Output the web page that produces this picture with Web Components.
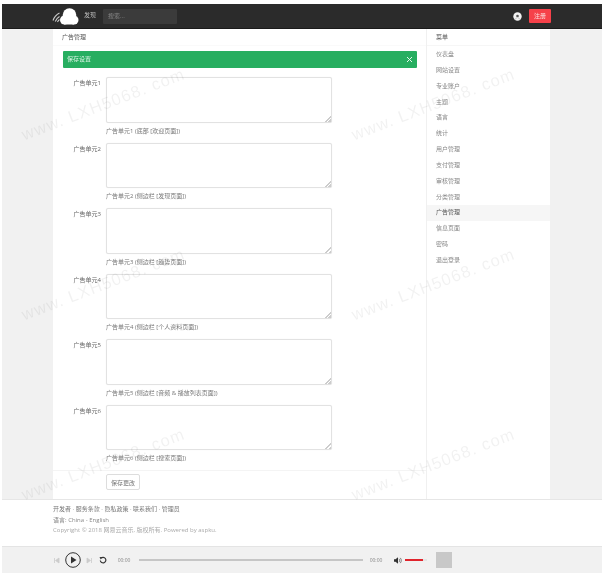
<!DOCTYPE html>
<html lang="zh"><head><meta charset="utf-8"><title>广告管理</title>
<style>
html,body{margin:0;padding:0;height:573px;overflow:hidden;background:#fff}
body{font:6px/1.3 "Open Sans","Noto Sans CJK SC",sans-serif;color:#666}
</style></head><body>
<app-shell>
  <app-header></app-header>
  <main-area></main-area>
  <site-footer></site-footer>
  <audio-player></audio-player>
  <water-marks></water-marks>
</app-shell>
<script>
function def(name,html){
  customElements.define(name,class extends HTMLElement{
    constructor(){super();this.attachShadow({mode:'open'}).innerHTML=typeof html==='function'?html(this):html;}
  });
}
def('app-shell',`<style>:host{display:flex;flex-direction:column;position:relative;box-sizing:border-box;width:600px;height:569px;margin:4px 0 0 2px;filter:blur(.35px)}</style><slot></slot>`);
def('app-header',`<style>
:host{display:flex;align-items:center;height:24px;flex:none;background:#2b2b2b;border-bottom:1px solid #1a1a1a;padding:0 51px 0 50px;color:#ccc}
svg{display:block}
.d{margin-left:5px;width:19px;font-size:6px;color:#bbb}
.s{width:74px;height:15px;box-sizing:border-box;background:#3b3b3b;padding:0 5px;line-height:15px;color:#888;border-radius:1px}
.g{flex:1}
.b{width:22px;height:14px;background:#f6414a;color:#fbdcdc;text-align:center;line-height:14px;border-radius:1px;margin-left:7px}
</style>
<svg width="27" height="18" viewBox="0 0 27 18" style="margin-top:1px"><g fill="#fff"><circle cx="17.500" cy="7" r="6.800"/><circle cx="12.500" cy="12" r="4.500"/><circle cx="22" cy="12" r="4.500"/><rect x="12" y="10" width="10" height="6.500"/></g><path d="M1 12.500C2 9.500 4.500 6.500 7.500 5M3.300 13.500C4 11.500 5.300 9.800 7.500 8.500M5.500 14C6 13 6.500 12.300 7.500 11.500" stroke="#ccc" stroke-width="1.100" fill="none"/></svg>
<span class="d">发现</span><span class="s">搜索...</span><span class="g"></span>
<svg width="9" height="9" viewBox="0 0 9 9"><circle cx="4.500" cy="4.500" r="4.200" fill="#f2f2f2"/><circle cx="4.500" cy="4" r="1.300" fill="#555"/><path d="M2.200 7.500l1.500-2M6.800 7.500l-1.500-2" stroke="#999" stroke-width=".6"/></svg>
<span class="b">注册</span>`);
def('main-area',`<style>
:host{display:flex;flex:1;min-height:0;background:#f1f1f1;padding:0 52px 0 51px;border-bottom:1px solid #e6e6e6}
.wrap{flex:1;display:flex;background:#fff}
.c{flex:none;width:373px;border-right:1px solid #f0f0f0;display:flex;flex-direction:column}
.t{height:17px;padding:3px 0 0 9px;box-sizing:border-box;line-height:11px;color:#555;border-bottom:1px solid #fafafa}
</style><div class="wrap"><div class="c"><div class="t">广告管理</div><ad-form></ad-form></div><side-menu></side-menu></div>`);
def('alert-bar',`<style>
:host{display:flex;align-items:center;justify-content:space-between;height:17px;margin:5px 9px 0 10px;background:#27ae60;color:#d9f3e3;padding:0 4px;border-radius:1px}
svg{display:block}
</style><slot></slot><svg width="7" height="7" viewBox="0 0 7 7"><path d="M1 1l5 5M6 1L1 6" stroke="#e8f7ee" stroke-width="1"/></svg>`);
def('ad-row',h=>`<style>
:host{display:grid;grid-template-columns:48px 226px;grid-template-rows:auto 1fr;column-gap:5px;height:65.600px;color:#666}
label{text-align:right;padding-top:2px;line-height:8px}
textarea{display:block;box-sizing:border-box;width:226px;height:45.500px;margin:0;border:1px solid #e2e2e2;box-shadow:0 0 1px #e8e8e8;border-radius:2px;background:#fff;outline:0}
textarea::-webkit-resizer{background:linear-gradient(135deg,transparent 78%,#ccc 78%,#ccc 84%,transparent 84%,transparent 90%,#ccc 90%)}
.h{grid-column:2;margin-top:4px;line-height:8px;color:#777}
</style><label>${h.getAttribute('label')}</label><textarea aria-label="${h.getAttribute('label')}"></textarea><div class="h">${h.getAttribute('help')}</div>`);
def('ad-form',`<style>
:host{display:flex;flex-direction:column;flex:1}
.f{padding:9px 0 0 0;display:flex;flex-direction:column}
.a{border-top:1px solid #f4f4f4;margin-top:-.5px;padding:3px 0 0 53px}
.a button{display:block;width:34px;height:16px;box-sizing:border-box;border:1px solid #ddd;border-radius:2px;background:#fff;font:6px "Open Sans","Noto Sans CJK SC",sans-serif;color:#777;padding:0}
</style><alert-bar>保存设置</alert-bar><div class="f">
<ad-row label="广告单元1" help="广告单元1 (底部 [欢迎页面])"></ad-row>
<ad-row label="广告单元2" help="广告单元2 (侧边栏 [发现页面])"></ad-row>
<ad-row label="广告单元3" help="广告单元3 (侧边栏 [趋势页面])"></ad-row>
<ad-row label="广告单元4" help="广告单元4 (侧边栏 [个人资料页面])"></ad-row>
<ad-row label="广告单元5" help="广告单元5 (侧边栏 [音频 &amp; 播放列表页面])"></ad-row>
<ad-row label="广告单元6" help="广告单元6 (侧边栏 [搜索页面])"></ad-row>
</div><div class="a"><button>保存更改</button></div>`);
def('side-menu',`<style>
:host{display:block;flex:1;color:#888}
.h{height:17px;box-sizing:border-box;padding:3px 0 0 9px;line-height:11px;color:#555;border-bottom:1px solid #f6f6f6}
ul{list-style:none;margin:0;padding:1px 0 0}
li{height:15.850px;line-height:15.850px;padding-left:9px}
li.on{background:#f6f6f6;color:#555}
</style><div class="h">菜单</div><ul>
<li>仪表盘</li><li>网站设置</li><li>专业账户</li><li>主题</li><li>语言</li><li>统计</li><li>用户管理</li><li>支付管理</li><li>审核管理</li><li>分类管理</li><li class="on">广告管理</li><li>信息页面</li><li>密码</li><li>退出登录</li></ul>`);
def('site-footer',`<style>
:host{display:block;flex:none;height:47px;box-sizing:border-box;padding:4px 0 0 51px;background:#fff;color:#888;line-height:10.500px;border-bottom:1px solid #e4e4e4}
div{white-space:pre}
.m{color:#777}
</style><div class="m">开发者 · 服务条款 · 隐私政策 · 联系我们 · 管理员</div><div>语言: China - English</div><div style="color:#aaa">Copyright © 2018 网易云音乐, 版权所有. Powered by aspku.</div>`);
def('audio-player',`<style>
:host{display:flex;align-items:center;flex:none;height:26px;background:#f1f1f1;padding:0 0 0 51px;color:#888}
svg{display:block;flex:none}
.t{width:15px;text-align:center;font-size:5px}
.bar{width:224px;height:1.500px;background:#c6c6c6;margin:0 6px 0 7px}
.v{width:22px;height:1.500px;background:#e4e4e4;margin-left:3px}
.v i{display:block;width:18px;height:100%;background:#e0242c}
.art{width:16px;height:16px;background:#c8c8c8;margin-left:9px}
</style>
<svg width="7" height="7" viewBox="0 0 7 7"><path d="M1.500 1v5M6 1L2.500 3.500 6 6z" stroke="#ccc" stroke-width=".8" fill="#ccc"/></svg>
<svg style="margin-left:4.500px" width="16" height="16" viewBox="0 0 16 16"><circle cx="8" cy="8" r="7.300" fill="none" stroke="#333" stroke-width="1"/><path d="M6 4.500v7L11.500 8z" fill="#333"/></svg>
<svg style="margin-left:5px" width="7" height="7" viewBox="0 0 7 7"><path d="M5.500 1v5M1 1l3.500 2.500L1 6z" stroke="#ccc" stroke-width=".8" fill="#ccc"/></svg>
<svg style="margin-left:6.500px" width="8" height="8" viewBox="0 0 8 8"><path d="M2 2.200A2.800 2.800 0 1 1 1.300 4.500" fill="none" stroke="#333" stroke-width="1.200"/><path d="M.5 1l3 .2-1.800 2.200z" fill="#333"/></svg>
<span class="t" style="margin-left:9.500px">00:00</span><span class="bar"></span><span class="t">00:00</span>
<svg style="margin-left:10px" width="8" height="7" viewBox="0 0 8 7"><path d="M0 2.300h1.500L4 .3v6.400L1.500 4.700H0z" fill="#333"/><path d="M5 1.800c.8 1 .8 2.400 0 3.400M6.300.9c1.300 1.500 1.300 3.700 0 5.200" stroke="#333" stroke-width=".6" fill="none"/></svg>
<span class="v"><i></i></span><span class="art"></span>`);
def('water-marks',`<style>
:host{position:absolute;left:0;top:0;right:0;bottom:0;pointer-events:none;display:grid;grid-template-columns:repeat(2,330px);grid-auto-rows:180px;padding:119px 0 0 20px;overflow:hidden}
span{display:block;width:180px;height:24px;white-space:nowrap;font:16.500px/24px "Liberation Sans",sans-serif;letter-spacing:1.200px;color:rgba(0,0,0,.055);transform:rotate(-21deg);transform-origin:0 50%}
</style><span>www. LXH5068. com</span><span>www. LXH5068. com</span><span>www. LXH5068. com</span><span>www. LXH5068. com</span><span>www. LXH5068. com</span><span>www. LXH5068. com</span>`);
</script>
</body></html>
